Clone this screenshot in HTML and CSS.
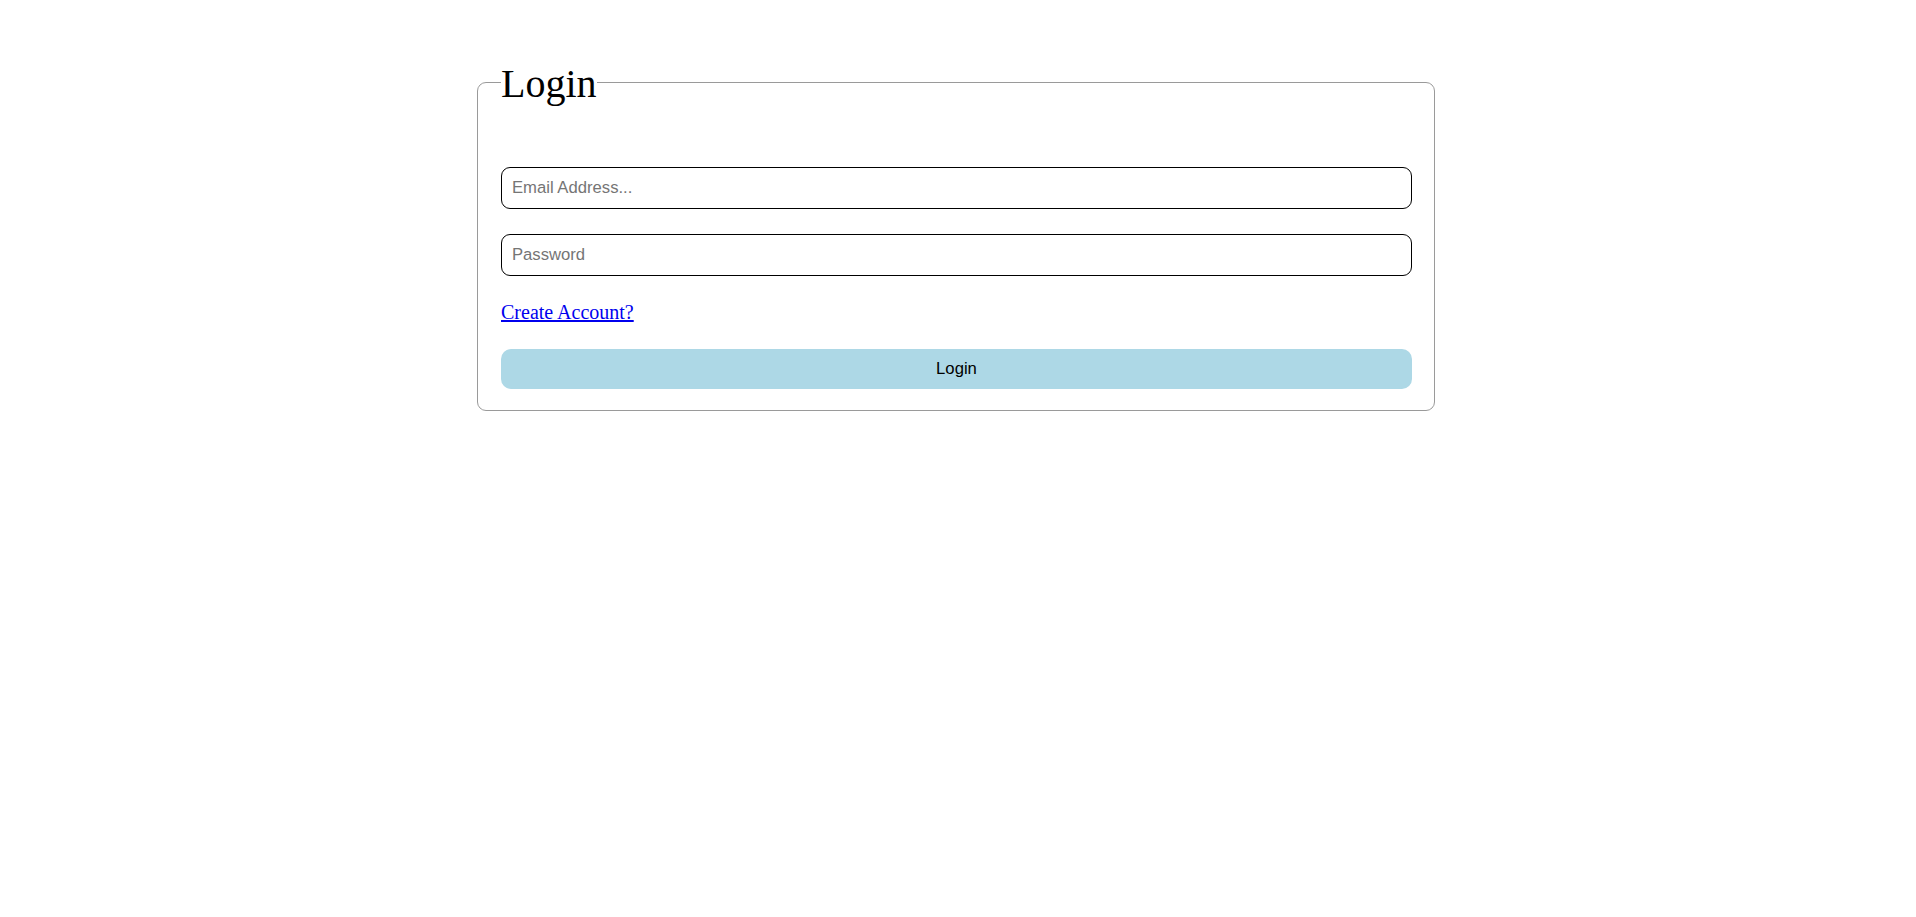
FILE: index.html
```html
<!DOCTYPE html>
<html lang="en">
<head>
<meta charset="utf-8">
<title>Login</title>
<link rel="stylesheet" href="styles.css">
</head>
<body>
<main class="page">
  <fieldset class="login-box">
    <legend class="login-title">Login</legend>
    <form class="login-form">
      <input class="field" type="email" placeholder="Email Address...">
      <input class="field" type="password" placeholder="Password">
      <a class="create-link" href="#">Create Account?</a>
      <button class="login-btn" type="button">Login</button>
    </form>
  </fieldset>
</main>
</body>
</html>
```

FILE: styles.css
```css
html, body {
  margin: 0;
  padding: 0;
  background: #ffffff;
}

body {
  font-family: "Liberation Serif", "Times New Roman", serif;
  font-size: 20px;
  color: #000;
}

.page {
  padding-top: 58px;
}

.login-box {
  box-sizing: border-box;
  width: 958px;
  margin: 0 0 0 477px;
  padding: 0 22px 21px 23px;
  border: 1.25px solid #9a9a9a;
  border-radius: 9px;
  min-width: 0;
}

.login-title {
  font-family: "Liberation Serif", "Times New Roman", serif;
  font-size: 40px;
  line-height: 46px;
  padding: 3px 0 0 0;
  margin: 0;
  font-weight: normal;
}

.login-form {
  display: flex;
  flex-direction: column;
  gap: 25px;
  padding-top: 60px;
  margin: 0;
}

.field {
  box-sizing: border-box;
  width: 100%;
  height: 42px;
  padding: 0 10px;
  margin: 0;
  border: 1px solid #000;
  border-radius: 9px;
  font-family: "Liberation Sans", Arial, sans-serif;
  font-size: 16.67px;
  color: #000;
  background: #fff;
  outline: none;
}

.field::placeholder {
  color: #757575;
}

.create-link {
  align-self: flex-start;
  font-family: "Liberation Serif", "Times New Roman", serif;
  font-size: 20px;
  line-height: 23px;
  color: #0000ee;
  text-decoration: underline;
}

.login-btn {
  box-sizing: border-box;
  width: 100%;
  height: 40px;
  margin: 0;
  border: none;
  border-radius: 10px;
  background: #add8e6;
  color: #000;
  font-family: "Liberation Sans", Arial, sans-serif;
  font-size: 16.67px;
  cursor: pointer;
}
```
